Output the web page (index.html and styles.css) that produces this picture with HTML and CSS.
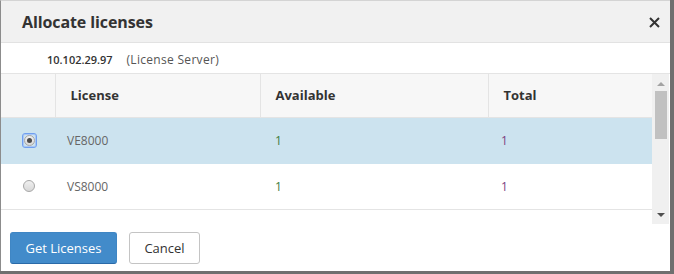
FILE: index.html
```html
<!DOCTYPE html>
<html lang="en">
<head>
    <meta charset="UTF-8">
    <title>Allocate licenses</title>
    <link rel="stylesheet" href="styles.css">
</head>
<body>
    <div class="dialog">
        <!-- header -->
        <div class="dialog-header">
            <h2 class="dialog-title">Allocate licenses</h2>
            <button class="close-btn" aria-label="Close">
                <svg width="11" height="11" viewBox="0 0 11 11">
                    <path d="M1 1 L10 10 M10 1 L1 10" stroke="#333" stroke-width="2" fill="none"/>
                </svg>
            </button>
        </div>

        <div class="server-line">
            <span class="server-ip">10.102.29.97</span>
            <span class="server-label">(License Server)</span>
        </div>

        <!-- license table -->
        <div class="table-wrap">
            <div class="table-area">
                <table class="license-table">
                    <thead>
                        <tr>
                            <th class="col-radio"></th>
                            <th class="col-name">License</th>
                            <th class="col-avail">Available</th>
                            <th class="col-total">Total</th>
                        </tr>
                    </thead>
                    <tbody>
                        <tr class="selected">
                            <td class="col-radio"><span class="radio-focus"><span class="radio checked"></span></span></td>
                            <td>VE8000</td>
                            <td class="num-avail">1</td>
                            <td class="num-total">1</td>
                        </tr>
                        <tr>
                            <td class="col-radio"><span class="radio"></span></td>
                            <td>VS8000</td>
                            <td class="num-avail">1</td>
                            <td class="num-total">1</td>
                        </tr>
                    </tbody>
                </table>
            </div>
            <div class="scrollbar">
                <span class="arrow-up"></span>
                <span class="thumb"></span>
                <span class="arrow-down"></span>
            </div>
        </div>

        <div class="dialog-footer">
            <button class="btn btn-primary">Get Licenses</button>
            <button class="btn btn-default">Cancel</button>
        </div>
    </div>
</body>
</html>
```

FILE: styles.css
```css
* {
    margin: 0;
    padding: 0;
    box-sizing: border-box;
}

body {
    background: #6f6f6f;
    font-family: 'Open Sans', 'Liberation Sans', sans-serif;
    width: 674px;
    height: 274px;
    overflow: hidden;
}

.dialog {
    width: 670px;
    height: 271px;
    background: #fff;
    border-top: 1px solid #d4d4d4;
    border-left: 1px solid #8c8c8c;
    display: flex;
    flex-direction: column;
}

.dialog-header {
    height: 42px;
    background: #f1f1f1;
    border-bottom: 1px solid #e2e2e2;
    display: flex;
    align-items: center;
    justify-content: space-between;
    padding: 0 6px 0 21px;
}

.dialog-title {
    font-size: 16px;
    font-weight: bold;
    color: #333;
    letter-spacing: -0.1px;
}

.close-btn {
    border: none;
    background: none;
    width: 20px;
    height: 20px;
    display: flex;
    align-items: center;
    justify-content: center;
    margin-top: 1px;
}

.server-line {
    height: 30px;
    padding: 8px 0 0 46px;
    font-size: 11px;
    color: #333;
}

.server-ip {
    font-weight: 600;
    margin-right: 11px;
}

.server-label {
    font-size: 12px;
    color: #555;
    letter-spacing: 0.3px;
}

/* table + fake scrollbar */
.table-wrap {
    height: 151px;
    display: flex;
    border-top: 1px solid #e4e4e4;
}

.table-area {
    width: 651px;
    overflow: hidden;
}

.license-table {
    width: 651px;
    border-collapse: collapse;
    table-layout: fixed;
    font-size: 12px;
}

.license-table th {
    height: 43px;
    background: #f7f7f7;
    border-bottom: 1px solid #e4e4e4;
    border-right: 1px solid #e4e4e4;
    text-align: left;
    font-size: 13px;
    font-weight: bold;
    color: #333;
    padding-left: 15px;
}

.license-table th:last-child {
    border-right: none;
}

.license-table td {
    height: 46px;
    border-bottom: 1px solid #e4e4e4;
    color: #666;
    padding-left: 12px;
}

.license-table tr.selected td {
    background: #cce3ef;
    border-bottom-color: #cce3ef;
}

.col-radio { width: 54px; }
.col-name { width: 205px; }
.col-avail { width: 228px; }

.license-table td.col-radio {
    padding-left: 22px;
}

.license-table td.num-avail { color: #3d7d3d; padding-left: 15px; }
.license-table td.num-total { color: #7c3f82; padding-left: 13px; }

.radio {
    display: block;
    width: 12px;
    height: 12px;
    border-radius: 50%;
    border: 1px solid #a8a8a8;
    background: linear-gradient(#f0f0f0, #d8d8d8);
    position: relative;
}

.radio.checked::after {
    content: '';
    position: absolute;
    width: 6px;
    height: 6px;
    left: 2px;
    top: 2px;
    border-radius: 50%;
    background: #4a4a4a;
}

.radio-focus {
    display: block;
    width: 15px;
    height: 15px;
    margin-left: -1px;
    padding: 1px;
    border: 1px solid #6f9ff0;
    border-radius: 3px;
    box-shadow: inset 0 0 0 1px #a9c6f5;
}

.radio-focus .radio {
    width: 11px;
    height: 11px;
}

.radio-focus .radio.checked::after {
    width: 5px;
    height: 5px;
}

.scrollbar {
    width: 17px;
    background: #f0f0f0;
    display: flex;
    flex-direction: column;
    align-items: center;
}

.arrow-up {
    margin-top: 8px;
    width: 0;
    height: 0;
    border-left: 4px solid transparent;
    border-right: 4px solid transparent;
    border-bottom: 4px solid #a3a3a3;
}

.thumb {
    margin-top: 5px;
    width: 12px;
    height: 48px;
    background: #c1c1c1;
}

.arrow-down {
    margin-top: auto;
    margin-bottom: 7px;
    width: 0;
    height: 0;
    border-left: 4px solid transparent;
    border-right: 4px solid transparent;
    border-top: 4px solid #505050;
}

.dialog-footer {
    flex: 1;
    display: flex;
    gap: 12px;
    padding: 8px 0 0 9px;
}

.btn {
    height: 32px;
    border-radius: 3px;
    font-family: inherit;
    font-size: 13px;
    padding: 0;
    white-space: nowrap;
}

.btn-primary {
    width: 107px;
    background: #428bca;
    border: 1px solid #3f86c4;
    border-bottom-color: #2a6aa8;
    color: #fff;
}

.btn-default {
    width: 71px;
    background: #fff;
    border: 1px solid #c4c4c4;
    color: #333;
}
```
